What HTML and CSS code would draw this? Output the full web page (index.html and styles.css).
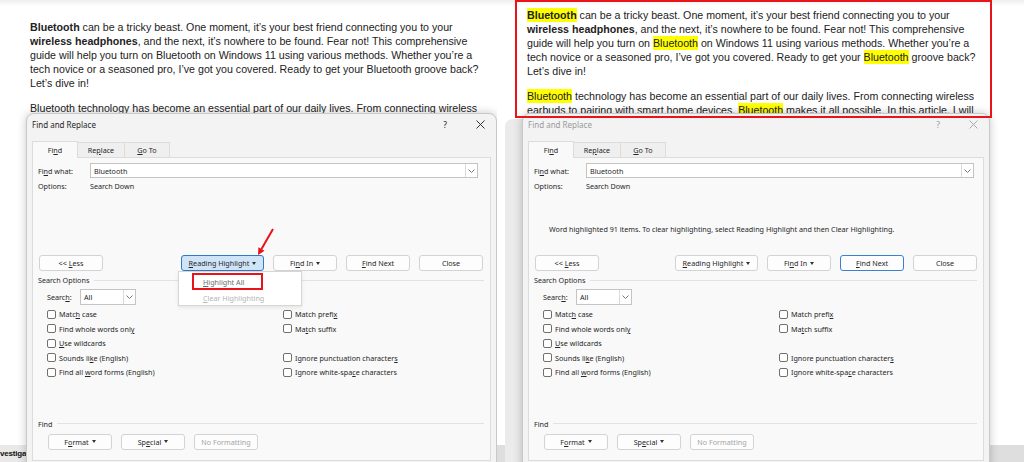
FILE: index.html
```html
<!DOCTYPE html>
<html lang="en">
<head>
<meta charset="utf-8">
<title>Find and Replace – Highlight All</title>
<link rel="stylesheet" href="styles.css">
</head>
<body>
<div class="screen">

  <section class="shot shot-left">
    <div class="doc">
      <p><b>Bluetooth</b> can be a tricky beast. One moment, it’s your best friend connecting you to your<br><b>wireless headphones</b>, and the next, it’s nowhere to be found. Fear not! This comprehensive<br>guide will help you turn on Bluetooth on Windows 11 using various methods. Whether you’re a<br>tech novice or a seasoned pro, I’ve got you covered. Ready to get your Bluetooth groove back?<br>Let’s dive in!</p>
      <p>Bluetooth technology has become an essential part of our daily lives. From connecting wireless</p>
    </div>
    <div class="status"><span class="status-text">vestiga</span></div>

    <div class="dialog">
      <div class="titlebar">
        <span class="title">Find and Replace</span>
        <span class="tb-help">?</span>
        <span class="tb-close"><svg width="9" height="9" viewBox="0 0 9 9"><path d="M0.5 0.5L8.5 8.5M8.5 0.5L0.5 8.5" stroke="currentColor" stroke-width="1" fill="none"/></svg></span>
      </div>
      <div class="tabs">
        <span class="tab tab-find active"><span>Fi<u>n</u>d</span></span>
        <span class="tab tab-replace"><span>Re<u>p</u>lace</span></span>
        <span class="tab tab-goto"><span><u>G</u>o To</span></span>
      </div>
      <div class="pane">
        <div class="find-row">
          <span class="lbl">Fi<u>n</u>d what:</span>
          <div class="combo"><span class="combo-val">Bluetooth</span><span class="combo-arrow"><svg width="7" height="4" viewBox="0 0 7 4"><path d="M0.5 0.5L3.5 3.5L6.5 0.5" stroke="#777" fill="none"/></svg></span></div>
        </div>
        <div class="opt-row"><span class="lbl">Options:</span><span>Search Down</span></div>
        <div class="msg"></div>
        <div class="btn-row">
          <span class="btn"><span>&lt;&lt; <u>L</u>ess</span></span>
          <div class="btn-group">
            <span class="btn btn-wide btn-pressed"><span><u>R</u>eading Highlight</span><i class="caret"></i></span>
            <span class="btn"><span>Fi<u>n</u>d In</span><i class="caret"></i></span>
            <span class="btn"><span><u>F</u>ind Next</span></span>
            <span class="btn"><span>Close</span></span>
          </div>
        </div>
        <div class="section-head"><span>Search Options</span><span class="rule"></span></div>
        <div class="search-row">
          <span class="search-lbl">Searc<u>h</u>:</span>
          <div class="select"><span class="combo-val">All</span><span class="combo-arrow"><svg width="7" height="4" viewBox="0 0 7 4"><path d="M0.5 0.5L3.5 3.5L6.5 0.5" stroke="#777" fill="none"/></svg></span></div>
        </div>
        <div class="checks">
          <label class="chk"><i class="box"></i><span>Matc<u>h</u> case</span></label>
          <label class="chk"><i class="box"></i><span>Match prefi<u>x</u></span></label>
          <label class="chk"><i class="box"></i><span>Find whole words onl<u>y</u></span></label>
          <label class="chk"><i class="box"></i><span>Ma<u>t</u>ch suffix</span></label>
          <label class="chk"><i class="box"></i><span><u>U</u>se wildcards</span></label>
          <span></span>
          <label class="chk"><i class="box"></i><span>Sounds li<u>k</u>e (English)</span></label>
          <label class="chk"><i class="box"></i><span>Ignore punctuation character<u>s</u></span></label>
          <label class="chk"><i class="box"></i><span>Find all <u>w</u>ord forms (English)</span></label>
          <label class="chk"><i class="box"></i><span>Ignore white-spa<u>c</u>e characters</span></label>
        </div>
        <div class="section-head find-head"><span>Find</span><span class="rule"></span></div>
        <div class="fmt-row">
          <span class="btn"><span>F<u>o</u>rmat</span><i class="caret"></i></span>
          <span class="btn"><span>Sp<u>e</u>cial</span><i class="caret"></i></span>
          <span class="btn btn-disabled"><span>No Formatting</span></span>
        </div>
      </div>

      <div class="menu">
        <div class="menu-item first"><span class="hl-box"><span><u>H</u>ighlight All</span></span></div>
        <div class="menu-item disabled"><span><u>C</u>lear Highlighting</span></div>
      </div>
    </div>

    <svg class="arrow" width="28" height="35" viewBox="0 0 28 35">
      <path d="M23 4L11.5 23.9" stroke="#e8141a" stroke-width="2" fill="none"/>
      <path d="M8 30L14.6 25.7L8.4 22.2Z" fill="#e8141a"/>
    </svg>
  </section>

  <section class="shot shot-right">
    <div class="doc">
      <p><mark><b>Bluetooth</b></mark> can be a tricky beast. One moment, it’s your best friend connecting you to your<br><b>wireless headphones</b>, and the next, it’s nowhere to be found. Fear not! This comprehensive<br>guide will help you turn on <mark>Bluetooth</mark> on Windows 11 using various methods. Whether you’re a<br>tech novice or a seasoned pro, I’ve got you covered. Ready to get your <mark>Bluetooth</mark> groove back?<br>Let’s dive in!</p>
      <p><mark>Bluetooth</mark> technology has become an essential part of our daily lives. From connecting wireless<br>earbuds to pairing with smart home devices, <mark>Bluetooth</mark> makes it all possible. In this article, I will</p>
    </div>
    <div class="status"><span class="status-text">tiga</span></div>

    <div class="dialog dialog-inactive">
      <div class="titlebar">
        <span class="title">Find and Replace</span>
        <span class="tb-help">?</span>
        <span class="tb-close"><svg width="9" height="9" viewBox="0 0 9 9"><path d="M0.5 0.5L8.5 8.5M8.5 0.5L0.5 8.5" stroke="currentColor" stroke-width="1" fill="none"/></svg></span>
      </div>
      <div class="tabs">
        <span class="tab tab-find active"><span>Fi<u>n</u>d</span></span>
        <span class="tab tab-replace"><span>Re<u>p</u>lace</span></span>
        <span class="tab tab-goto"><span><u>G</u>o To</span></span>
      </div>
      <div class="pane">
        <div class="find-row">
          <span class="lbl">Fi<u>n</u>d what:</span>
          <div class="combo"><span class="combo-val">Bluetooth</span><span class="combo-arrow"><svg width="7" height="4" viewBox="0 0 7 4"><path d="M0.5 0.5L3.5 3.5L6.5 0.5" stroke="#777" fill="none"/></svg></span></div>
        </div>
        <div class="opt-row"><span class="lbl">Options:</span><span>Search Down</span></div>
        <div class="msg"><span>Word highlighted 91 items. To clear highlighting, select Reading Highlight and then Clear Highlighting.</span></div>
        <div class="btn-row">
          <span class="btn"><span>&lt;&lt; <u>L</u>ess</span></span>
          <div class="btn-group">
            <span class="btn btn-wide"><span><u>R</u>eading Highlight</span><i class="caret"></i></span>
            <span class="btn"><span>Fi<u>n</u>d In</span><i class="caret"></i></span>
            <span class="btn btn-focus"><span><u>F</u>ind Next</span></span>
            <span class="btn"><span>Close</span></span>
          </div>
        </div>
        <div class="section-head"><span>Search Options</span><span class="rule"></span></div>
        <div class="search-row">
          <span class="search-lbl">Searc<u>h</u>:</span>
          <div class="select"><span class="combo-val">All</span><span class="combo-arrow"><svg width="7" height="4" viewBox="0 0 7 4"><path d="M0.5 0.5L3.5 3.5L6.5 0.5" stroke="#777" fill="none"/></svg></span></div>
        </div>
        <div class="checks">
          <label class="chk"><i class="box"></i><span>Matc<u>h</u> case</span></label>
          <label class="chk"><i class="box"></i><span>Match prefi<u>x</u></span></label>
          <label class="chk"><i class="box"></i><span>Find whole words onl<u>y</u></span></label>
          <label class="chk"><i class="box"></i><span>Ma<u>t</u>ch suffix</span></label>
          <label class="chk"><i class="box"></i><span><u>U</u>se wildcards</span></label>
          <span></span>
          <label class="chk"><i class="box"></i><span>Sounds li<u>k</u>e (English)</span></label>
          <label class="chk"><i class="box"></i><span>Ignore punctuation character<u>s</u></span></label>
          <label class="chk"><i class="box"></i><span>Find all <u>w</u>ord forms (English)</span></label>
          <label class="chk"><i class="box"></i><span>Ignore white-spa<u>c</u>e characters</span></label>
        </div>
        <div class="section-head find-head"><span>Find</span><span class="rule"></span></div>
        <div class="fmt-row">
          <span class="btn"><span>F<u>o</u>rmat</span><i class="caret"></i></span>
          <span class="btn"><span>Sp<u>e</u>cial</span><i class="caret"></i></span>
          <span class="btn btn-disabled"><span>No Formatting</span></span>
        </div>
      </div>
    </div>

    <div class="red-frame"></div>
  </section>

</div>
</body>
</html>
```

FILE: styles.css
```css
* { box-sizing: border-box; }

html, body {
  margin: 0;
  width: 1024px;
  height: 462px;
  overflow: hidden;
  background: #fff;
}

body {
  font-family: "Liberation Sans", Arial, sans-serif;
}

.screen {
  display: flex;
  height: 462px;
}

.shot {
  position: relative;
  height: 462px;
  display: flex;
  flex-direction: column;
  background: linear-gradient(#eeeeee, #ffffff 6px);
}

.shot-left { width: 497px; flex: none; }
.shot-right { flex: 1; }

/* ---------- document text ---------- */
.doc {
  flex: 1;
  padding: 20px 0 0 30px;
  font-size: 10.65px;
  line-height: 14px;
  color: #222;
  white-space: nowrap;
}
.shot-right .doc { padding: 8px 0 0 30px; }

.doc p { margin: 0 0 11px; }
.doc b { font-weight: bold; }

.doc mark {
  background: #ffff00;
  color: #222;
  padding: 1px 0;
}

.status {
  height: 17px;
  background: #e9e9e9;
  display: flex;
  align-items: center;
  font-size: 8px;
  font-weight: bold;
  color: #111;
}
.shot-left .status { padding-left: 0; letter-spacing: -0.2px; }
.shot-right .status { padding-left: 10px; background: #dedede; }

/* ---------- dialog ---------- */
.dialog {
  position: absolute;
  top: 113px;
  left: 26px;
  width: 471px;
  height: 356px;
  padding: 0 5px 6px;
  background: #f3f3f3;
  border: 1px solid #c8c8c8;
  border-radius: 8px 8px 0 0;
  box-shadow: 0 0 10px rgba(0, 0, 0, 0.22);
  font-family: "Noto Sans", "Open Sans", sans-serif;
  font-size: 7.2px;
  color: #262626;
}

.shot-right .dialog {
  left: 25px;
  width: 468px;
  box-shadow: 0 0 10px rgba(0, 0, 0, 0.22), -17px 6px 0 0 #ebebeb;
}

.titlebar {
  height: 20px;
  display: flex;
  align-items: center;
}
.title {
  flex: 1;
  font-size: 8px;
}
.tb-help {
  width: 22px;
  margin-right: 13px;
  text-align: center;
  font-size: 8.5px;
}
.tb-close {
  width: 22px;
  display: flex;
  justify-content: center;
  color: #333;
}
.dialog-inactive .title,
.dialog-inactive .tb-help { color: #9a9a9a; }
.dialog-inactive .tb-close { color: #a8a8a8; }

.tabs {
  display: flex;
  align-items: flex-end;
  height: 16px;
  margin-top: 7px;
  position: relative;
  z-index: 1;
}
.tab {
  height: 15px;
  display: flex;
  align-items: center;
  justify-content: center;
  background: #efefef;
  border: 1px solid #dcdcdc;
  border-bottom: none;
}
.tab + .tab { border-left: none; }
.tab.active {
  height: 17px;
  margin-bottom: -1px;
  background: #f9f9f9;
}
.tab-find { width: 46px; }
.tab-replace { width: 47px; }
.tab-goto { width: 45px; }

.pane {
  height: 304px;
  background: #f9f9f9;
  border: 1px solid #dcdcdc;
  display: flex;
  flex-direction: column;
}

.find-row,
.opt-row {
  display: flex;
  align-items: center;
}
.find-row { margin-top: 5px; height: 15px; }
.opt-row { margin-top: 1px; height: 14px; }

.lbl {
  width: 57px;
  padding-left: 5px;
  flex: none;
}

.combo,
.select {
  display: flex;
  height: 15px;
  background: #fff;
  border: 1px solid #c4c4c4;
}
.combo { width: 388px; }
.combo-val {
  flex: 1;
  display: flex;
  align-items: center;
  padding-left: 3px;
}
.combo-arrow {
  width: 12px;
  border-left: 1px solid #dadada;
  display: flex;
  align-items: center;
  justify-content: center;
}

.msg {
  height: 62px;
  padding: 29px 0 0 20px;
  line-height: 14px;
  white-space: nowrap;
}

.btn-row {
  display: flex;
  height: 16px;
  padding: 0 6px;
}
.shot-left .btn-row { padding-right: 7px; }
.btn-group {
  margin-left: auto;
  display: flex;
  gap: 9px;
}

.btn {
  width: 64px;
  height: 16px;
  display: flex;
  align-items: center;
  justify-content: center;
  gap: 3px;
  background: #fdfdfd;
  border: 1px solid #d3d3d3;
  border-radius: 3px;
  white-space: nowrap;
}
.btn-wide { width: 83px; }
.btn-pressed {
  background: #cfe4f7;
  border-color: #2f79c8;
}
.btn-focus { border-color: #3a82d0; }
.btn-disabled { color: #a3a3a3; }

.caret {
  display: inline-block;
  width: 0;
  height: 0;
  border-left: 2.5px solid transparent;
  border-right: 2.5px solid transparent;
  border-top: 3px solid #333;
}

.section-head {
  display: flex;
  align-items: center;
  height: 12px;
  margin-top: 3px;
  padding: 0 6px 0 5px;
}
.section-head .rule {
  flex: 1;
  margin-left: 5px;
  border-top: 1px solid #e2e2e2;
}
.find-head { margin-top: 38px; }

.search-row {
  display: flex;
  align-items: center;
  height: 16px;
  margin-top: 3px;
  padding-left: 14px;
}
.search-lbl { width: 33px; }
.select { width: 56px; height: 16px; }

.checks {
  margin-top: 2px;
  padding-left: 14px;
  display: grid;
  grid-template-columns: 236px 1fr;
  grid-auto-rows: 14.5px;
}
.chk {
  display: flex;
  align-items: center;
  gap: 3px;
  white-space: nowrap;
}
.box {
  width: 9px;
  height: 9px;
  flex: none;
  background: #fff;
  border: 1px solid #707070;
  border-radius: 2px;
}

.fmt-row {
  display: flex;
  gap: 9px;
  margin-top: 4px;
  padding-left: 15px;
}

/* ---------- dropdown menu ---------- */
.menu {
  position: absolute;
  left: 151px;
  top: 157px;
  width: 124px;
  height: 35px;
  background: #fff;
  border: 1px solid #d6d6d6;
  box-shadow: 0 2px 4px rgba(0, 0, 0, 0.08);
  z-index: 2;
}
.menu-item {
  height: 16px;
  display: flex;
  align-items: center;
  padding-left: 24px;
  color: #6e6e6e;
}
.menu-item.first {
  height: 17px;
  margin-top: 1px;
  padding-left: 13px;
}
.menu-item.disabled { color: #b5b5b5; }
.hl-box {
  height: 17px;
  width: 71px;
  display: flex;
  align-items: center;
  padding-left: 9px;
  border: 2px solid #e8141a;
}

/* ---------- annotations ---------- */
.arrow {
  position: absolute;
  left: 250px;
  top: 225px;
  z-index: 3;
}

.red-frame {
  position: absolute;
  left: 18px;
  top: 0;
  width: 477px;
  height: 118px;
  border: 2px solid #e8141a;
  z-index: 3;
}
```
